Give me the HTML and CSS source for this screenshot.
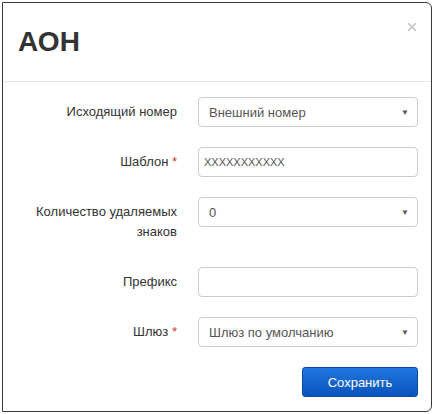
FILE: index.html
```html
<!DOCTYPE html>
<html lang="ru">
<head>
<meta charset="utf-8">
<title>АОН</title>
<link rel="stylesheet" href="styles.css">
</head>
<body>
<div class="modal">
  <div class="modal-header">
    <h4 class="modal-title">АОН</h4>
    <button class="close" type="button" aria-label="Закрыть">
      <svg width="10" height="10" viewBox="0 0 10 10"><path d="M1 1L9 9M9 1L1 9" stroke="#c4c4c4" stroke-width="1.6" fill="none"/></svg>
    </button>
  </div>
  <div class="modal-body">
    <form class="form">
      <label class="label">Исходящий номер</label>
      <div class="control select"><span>Внешний номер</span><span class="caret">▼</span></div>

      <label class="label">Шаблон <span class="req">*</span></label>
      <div class="control input"><span class="val">XXXXXXXXXXX</span></div>

      <label class="label">Количество удаляемых знаков</label>
      <div class="control select"><span>0</span><span class="caret">▼</span></div>

      <label class="label">Префикс</label>
      <div class="control input"></div>

      <label class="label">Шлюз <span class="req">*</span></label>
      <div class="control select"><span>Шлюз по умолчанию</span><span class="caret">▼</span></div>

      <div class="actions"><button type="button" class="btn">Сохранить</button></div>
    </form>
  </div>
</div>
</body>
</html>
```
FILE: styles.css
```css
html, body {
  margin: 0;
  padding: 0;
  background: #fff;
}
body {
  font-family: "Liberation Sans", Arial, sans-serif;
  font-size: 13px;
  color: #333;
}
.modal {
  position: relative;
  box-sizing: border-box;
  margin: 2px 0 0 2px;
  width: 430px;
  height: 410px;
  border: 1px solid #3a3a3a;
  border-radius: 0 6px 6px 0;
  background: #fff;
}
.modal-header {
  padding: 23px 15px 23px 15px;
  border-bottom: 1px solid #e5e5e5;
}
.modal-title {
  margin: 0;
  font-size: 28px;
  line-height: 32px;
  font-weight: bold;
  color: #333;
}
.close {
  position: absolute;
  top: 19px;
  right: 14px;
  padding: 0;
  border: 0;
  background: none;
  line-height: 0;
}
.modal-body {
  padding: 15px 12px 13px 15px;
}
.form {
  display: grid;
  grid-template-columns: 159px 220px;
  column-gap: 21px;
  row-gap: 20px;
}
.label {
  text-align: right;
  line-height: 20px;
  padding: 5px 0 5px 12px;
  color: #333;
}
.req {
  color: #c0392b;
}
.control {
  box-sizing: border-box;
  height: 30px;
  border: 1px solid #ccc;
  border-radius: 4px;
  background: #fff;
  display: flex;
  align-items: center;
  color: #555;
}
.select {
  justify-content: space-between;
  padding: 0 8px 0 10px;
}
.caret {
  font-size: 8px;
  color: #555;
}
.input {
  padding: 0 5px;
}
.val {
  font-size: 11px;
  color: #555;
}
.actions {
  grid-column: 1 / 3;
  display: flex;
  justify-content: flex-end;
}
.btn {
  width: 116px;
  height: 30px;
  border: 1px solid #0a4aa8;
  border-radius: 3px;
  background: linear-gradient(#2276e0, #0a52bb);
  color: #fff;
  font-family: "Liberation Sans", Arial, sans-serif;
  font-size: 13px;
  padding: 0;
}
```
